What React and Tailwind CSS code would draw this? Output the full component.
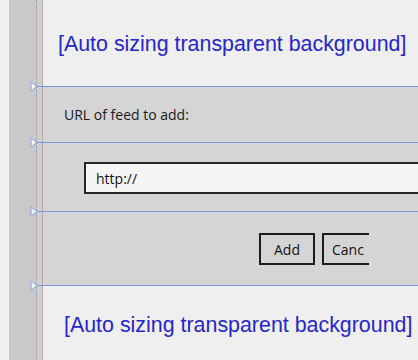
import React from 'react';

const ROWS = [86, 142, 211, 285];

function Marker({ top }) {
  return (
    <svg
      className="absolute left-[30px]"
      style={{ top: top - 5 }}
      width="8"
      height="11"
      viewBox="0 0 8 11"
    >
      <path d="M1 1 L7 5.5 L1 10 Z" fill="#f4f6fc" stroke="#8aa3dc" strokeWidth="1" />
    </svg>
  );
}

function Row({ h, first, light, children }) {
  return (
    <div
      className={`flex shrink-0 ${first ? '' : 'border-t border-[#7d98d8]'}`}
      style={{ height: h }}
    >
      <div className="w-[5px] shrink-0 bg-[#cfcfcf]" />
      <div className="w-px shrink-0 bg-[#b9a6a6]" />
      <div className={`flex-1 min-w-0 overflow-hidden ${light ? 'bg-[#efefef]' : 'bg-[#d5d5d5]'}`}>{children}</div>
    </div>
  );
}

export default function App() {
  const segoe = { fontFamily: '"Open Sans", "Noto Sans", sans-serif' };
  const arial = { fontFamily: '"Liberation Sans", Arial, sans-serif' };
  return (
    <div className="relative w-[418px] h-[360px] overflow-hidden flex bg-[#efefef]">
      <div className="w-[9px] shrink-0 bg-[#f0f0f0]" />
      <div className="w-[27px] shrink-0 bg-[#c9c9c9]" />
      <div className="w-px shrink-0 border-l border-dotted border-[#8a96b8] bg-[#c9c9c9]" />
      <div className="flex-1 min-w-0 flex flex-col">
        <Row h={86} first light>
          <div className="pt-[28px] pl-[15px] text-[21.4px] text-[#2626cc] whitespace-nowrap" style={arial}>
            [Auto sizing transparent background]
          </div>
        </Row>
        <Row h={56}>
          <div className="pt-[17px] pl-[21px] text-[14px] text-[#1a1a1a] whitespace-nowrap" style={segoe}>
            URL of feed to add:
          </div>
        </Row>
        <Row h={69}>
          <div className="pt-[19px] pl-[41px]">
            <div className="h-[32px] w-[400px] border-2 border-[#262626] bg-[#f5f5f5] flex items-center pl-[10px] text-[14px] text-[#111]" style={segoe}>
              http://
            </div>
          </div>
        </Row>
        <Row h={74}>
          <div className="pt-[21px] pl-[216px] flex gap-[7px] text-[14px] text-[#111]" style={segoe}>
            <div className="h-[32px] w-[56px] border-2 border-[#1c1c1c] flex items-center justify-center">Add</div>
            <div className="h-[32px] w-[47px] border-2 border-r-0 border-[#1c1c1c] flex items-center pl-[8px] overflow-hidden whitespace-nowrap">Canc</div>
          </div>
        </Row>
        <Row h={75} light>
          <div className="pt-[23px] pl-[21px] text-[21.4px] text-[#2626cc] whitespace-nowrap" style={arial}>
            [Auto sizing transparent background]
          </div>
        </Row>
      </div>
      {ROWS.map((t) => (
        <Marker key={t} top={t} />
      ))}
    </div>
  );
}
